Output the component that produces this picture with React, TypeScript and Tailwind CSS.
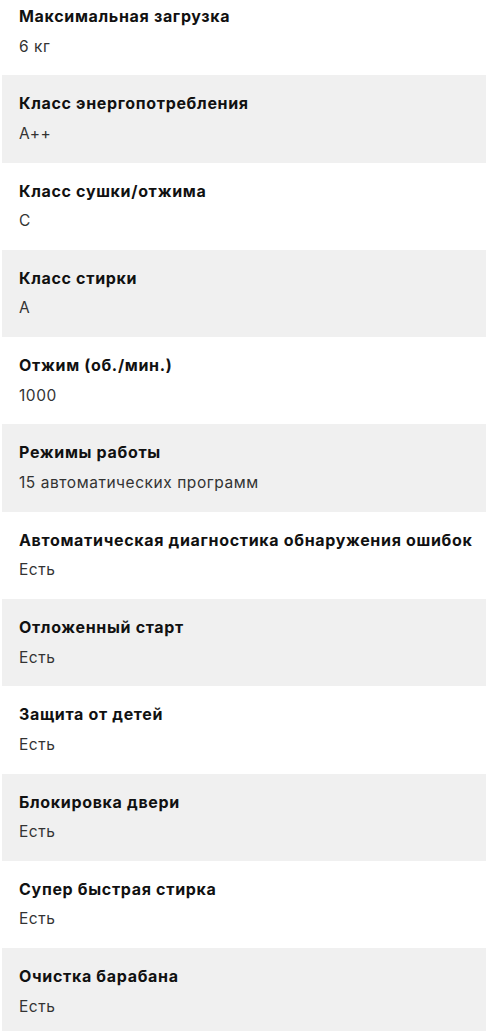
const specs = [
  { name: "Максимальная загрузка", value: "6 кг" },
  { name: "Класс энергопотребления", value: "A++" },
  { name: "Класс сушки/отжима", value: "C" },
  { name: "Класс стирки", value: "A" },
  { name: "Отжим (об./мин.)", value: "1000" },
  { name: "Режимы работы", value: "15 автоматических программ" },
  { name: "Автоматическая диагностика обнаружения ошибок", value: "Есть" },
  { name: "Отложенный старт", value: "Есть" },
  { name: "Защита от детей", value: "Есть" },
  { name: "Блокировка двери", value: "Есть" },
  { name: "Супер быстрая стирка", value: "Есть" },
  { name: "Очистка барабана", value: "Есть" },
];

export default function App() {
  return (
    <div className="w-[486px] h-[1031px] overflow-hidden bg-white font-['Inter',sans-serif]">
      <div className="-mt-[12px] ml-[2px] flex flex-col">
        {specs.map((s, i) => (
          <div
            key={s.name}
            className={`h-[87.3px] pl-[17px] pt-[17px] flex flex-col ${
              i % 2 === 1 ? "bg-[#f0f0f0]" : "bg-white"
            }`}
          >
            <p className="text-[16px] leading-[22px] font-bold text-[#111] tracking-[0.67px] whitespace-nowrap">
              {s.name}
            </p>
            <p className="mt-[8.5px] text-[15.5px] leading-[22px] text-[#333] tracking-[0.55px]">
              {s.value}
            </p>
          </div>
        ))}
      </div>
    </div>
  );
}
